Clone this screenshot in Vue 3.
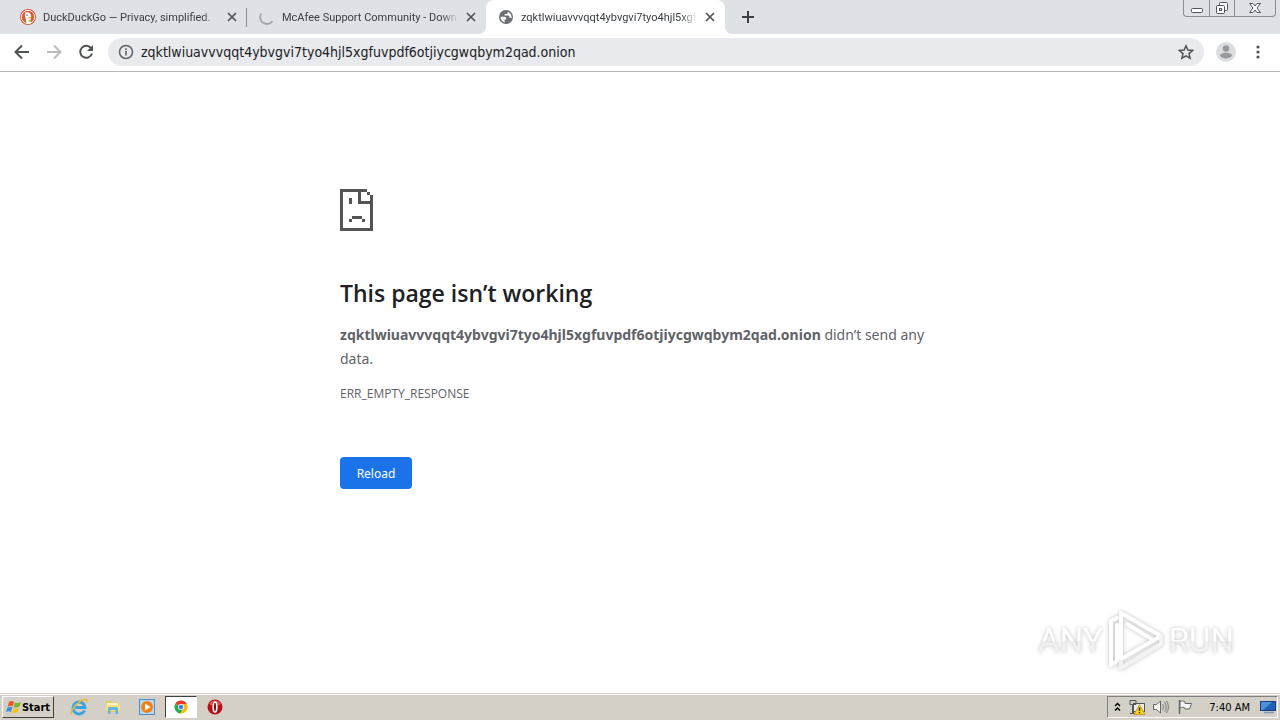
<template>
  <div class="screen">
    <header class="tab-strip">
      <div class="tabs">
        <div v-for="tab in tabs" :key="tab.title" class="tab" :class="{ active: tab.active }">
          <svg v-if="tab.icon === 'duck'" class="favicon" viewBox="0 0 16 16">
            <circle cx="8" cy="8" r="8" fill="#de5833" />
            <circle cx="8" cy="8" r="6.6" fill="none" stroke="#fff" stroke-width="1" />
            <path d="M5.500 3.500c2.500-1 5.500.5 5.500 3.500 0 1.500-.3 2-.5 2.800l.8 4.200c-1.500.8-3.600.7-4.600.2L5.300 8C4.700 6 4.500 4.500 5.500 3.500z" fill="#fff" />
            <path d="M8 8.300c1.200-.5 2.900-.4 4 0-.8.9-2.500 1.400-4 1.200z" fill="#fbbf2d" />
            <path d="M8.300 11.500l2.500-.5v1.800l-2.300-.2z" fill="#4cae4f" />
            <circle cx="7" cy="6.200" r=".7" fill="#38588a" />
          </svg>
          <svg v-else-if="tab.icon === 'spinner'" class="favicon" viewBox="0 0 16 16">
            <path d="M2.300 4.500A6.500 6.500 0 0 0 13.500 12" fill="none" stroke="#a5a8ac" stroke-width="1.800" />
          </svg>
          <svg v-else class="favicon" viewBox="0 0 16 16">
            <circle cx="8" cy="8" r="7" fill="#6b6e72" />
            <path d="M2.500 7.800h3.700c1.200 0 2 .8 2 2v.8h-1.600v2.800C4.300 12.700 2.500 10.600 2.500 7.800z" fill="#fff" />
            <path d="M9.600 2.700v.8c0 1-.6 1.500-1.500 1.500H6.600v1.500h3.500c.9 0 1.300.6 1.300 1.300v1h1c.5 0 .9.3 1.100.7.600-3-1.100-5.800-3.900-6.800z" fill="#fff" />
          </svg>
          <span class="tab-title">{{ tab.title }}</span>
          <button class="tab-close" :aria-label="'Close ' + tab.title">
            <svg width="10" height="10" viewBox="0 0 10 10">
              <path d="M1 1l8 8M9 1l-8 8" stroke="#4f5357" stroke-width="1.700" />
            </svg>
          </button>
        </div>
        <button class="new-tab" aria-label="New tab">
          <svg width="12" height="12" viewBox="0 0 12 12">
            <path d="M6 0v12M0 6h12" stroke="#3c4043" stroke-width="2" />
          </svg>
        </button>
      </div>
      <div class="window-controls">
        <button aria-label="Minimize">
          <svg width="14" height="14" viewBox="0 0 14 14">
            <rect x="1.500" y="7.500" width="11" height="4" rx="1" fill="#fff" stroke="#52555e" />
          </svg>
        </button>
        <button aria-label="Restore">
          <svg width="14" height="14" viewBox="0 0 14 14">
            <rect x="4.500" y="1.500" width="8" height="8" rx="1" fill="#fff" stroke="#52555e" />
            <rect x="1.500" y="4.500" width="8" height="8" rx="1" fill="#fff" stroke="#52555e" />
            <rect x="4.500" y="7.500" width="2" height="2" fill="#fff" stroke="#52555e" />
          </svg>
        </button>
        <button class="wide" aria-label="Close">
          <svg width="14" height="14" viewBox="0 0 14 14">
            <path d="M1.500 2.500h3.500l2 2.500 2-2.500h3.500L9 7l3.500 4.500H9L7 9l-2 2.500H1.500L5 7z" fill="#fff" stroke="#52555e" />
          </svg>
        </button>
      </div>
    </header>

    <nav class="toolbar">
      <button aria-label="Back">
        <svg width="16" height="16" viewBox="0 0 16 16">
          <path d="M15 8H2M8 1.500L1.500 8 8 14.500" fill="none" stroke="#505356" stroke-width="2" />
        </svg>
      </button>
      <button aria-label="Forward" disabled>
        <svg width="16" height="16" viewBox="0 0 16 16">
          <path d="M1 8h13M8 1.500L14.500 8 8 14.500" fill="none" stroke="#b9bbbe" stroke-width="2" />
        </svg>
      </button>
      <button aria-label="Reload page">
        <svg width="16" height="16" viewBox="0 0 16 16">
          <path d="M13.300 4.500A6 6 0 1 0 14 9.500" fill="none" stroke="#505356" stroke-width="2" />
          <path d="M15 1v6H9z" fill="#505356" />
        </svg>
      </button>
      <div class="omnibox">
        <svg width="16" height="16" viewBox="0 0 16 16">
          <circle cx="8" cy="8" r="6.500" fill="none" stroke="#5f6368" stroke-width="1.500" />
          <path d="M8 7v4.500M8 4.300v1.600" stroke="#5f6368" stroke-width="1.600" />
        </svg>
        <input v-model="address" type="text" aria-label="Address" spellcheck="false">
        <button aria-label="Bookmark this page">
          <svg width="16" height="16" viewBox="0 0 16 16">
            <path d="M8 1.800l1.900 4.300 4.700.4-3.600 3.100 1.100 4.600L8 11.800l-4.100 2.400L5 9.600 1.400 6.500l4.700-.4z" fill="none" stroke="#505356" stroke-width="1.500" />
          </svg>
        </button>
      </div>
      <button class="profile" aria-label="Profile">
        <svg width="20" height="20" viewBox="0 0 20 20">
          <circle cx="10" cy="10" r="10" fill="#dcdddf" />
          <circle cx="10" cy="6.500" r="3.200" fill="#96999d" />
          <path d="M4 13.800c0-2 3-3 6-3s6 1 6 3c-1.200 1.800-3.500 2.700-6 2.700s-4.800-.9-6-2.700z" fill="#96999d" />
        </svg>
      </button>
      <button class="menu" aria-label="Menu">
        <svg width="4" height="16" viewBox="0 0 4 16">
          <circle cx="2" cy="3" r="1.600" fill="#505356" />
          <circle cx="2" cy="8" r="1.600" fill="#505356" />
          <circle cx="2" cy="13" r="1.600" fill="#505356" />
        </svg>
      </button>
    </nav>

    <main class="page">
      <div class="error">
        <svg class="sad-icon" width="33" height="42" viewBox="0 0 33 42" shape-rendering="crispEdges">
          <path fill="#535353" d="M0 0h27v3H3v36h27V15H18V3h3v9h9V9h3v33H0zM27 3h3v3h-3zM30 6h3v3h-3zM9 9h3v6H9zM12 27h10v3H12zM9 30h3v3H9zM22 30h3v3h-3z" />
        </svg>
        <h1>This page isn’t working</h1>
        <p><strong>{{ address }}</strong> didn’t send any data.</p>
        <div class="error-code">ERR_EMPTY_RESPONSE</div>
        <button class="reload">Reload</button>
      </div>
      <div class="watermark">
        <span>ANY</span>
        <svg width="58" height="64" viewBox="0 0 58 64">
          <g fill="none" stroke="#fff" stroke-width="4" stroke-linejoin="round" stroke-linecap="round">
            <path d="M10 9l-6 3v44l6-4V16" />
            <path d="M14 50V4l40 23M14 50l40-23M20 15l26 16" />
            <path d="M14 59l40-24v-8M14 59v-6" stroke="#f3f3f3" />
          </g>
        </svg>
        <span>RUN</span>
      </div>
    </main>

    <footer class="taskbar">
      <button class="start">
        <svg width="16" height="16" viewBox="0 0 16 16">
          <path d="M3 3c2-1.500 3.500-1 5 0L6.700 7.500c-1.500-1-3-1.300-5 0z" fill="#e6592b" />
          <path d="M9 3.400c2 1 3.500 1 6-.4l-1.500 4.500c-2 1.400-4 1.300-5.800.4z" fill="#76b82a" />
          <path d="M1.400 8.600c2-1.300 3.500-1 5 0L5 13c-1.500-1-3-1.200-5 0z" fill="#3d91dc" />
          <path d="M7.400 9c2 1 3.500 1 5.800-.3L11.800 13c-2 1.400-4 1.400-5.800.4z" fill="#fbc21c" />
        </svg>
        Start
      </button>
      <div class="launchers">
        <button aria-label="Internet Explorer">
          <svg width="18" height="18" viewBox="0 0 18 18">
            <path d="M14.500 12.500A6 6 0 1 1 15 9.500H5" fill="none" stroke="#36a3e3" stroke-width="2.800" />
            <path d="M1.500 16.500C-.5 13.500 7 4 14 1.500c3-1 3.500.7 2.200 3" fill="none" stroke="#e8b92c" stroke-width="1.500" />
          </svg>
        </button>
        <button aria-label="Explorer">
          <svg width="18" height="18" viewBox="0 0 18 18">
            <path d="M2 3h5l1 1.500h7V14H2z" fill="#ecc95c" />
            <path d="M3 5h11v3H3z" fill="#fff6c8" />
            <path d="M2 7h14v6H2z" fill="#f7df83" />
            <path d="M4 16v-5c0-1.500.7-2 2-2h6c1.300 0 2 .5 2 2v5h-2.500v-4h-5v4z" fill="#62b5e5" />
          </svg>
        </button>
        <button aria-label="Media Player">
          <svg width="18" height="18" viewBox="0 0 18 18">
            <rect x="1.500" y="1.500" width="15" height="15" fill="#b5d9f2" stroke="#4c8ec9" />
            <circle cx="9" cy="9" r="6" fill="#f08316" />
            <path d="M7 5.500v7L12.500 9z" fill="#fff" />
          </svg>
        </button>
        <button class="running" aria-label="Chrome">
          <svg width="14" height="14" viewBox="0 0 16 16">
            <path d="M8 8L1.500 4.200A7.500 7.500 0 0 1 14.500 4.200z" fill="#e33b2e" />
            <path d="M8 8L1.500 4.200A7.500 7.500 0 0 0 7.500 15.500L11 9.500z" fill="#2da94f" />
            <path d="M8 4.500h6.700A7.500 7.500 0 0 1 7.500 15.500L11 9.500z" fill="#fdbd00" />
            <circle cx="8" cy="8" r="3.500" fill="#fff" />
            <circle cx="8" cy="8" r="2.700" fill="#4280ef" />
          </svg>
        </button>
        <button aria-label="Opera">
          <svg width="16" height="16" viewBox="0 0 16 16">
            <circle cx="8" cy="8" r="7.500" fill="#b51218" />
            <path d="M2 5a7 7 0 0 1 12 0c-3 2-9 2-12 0z" fill="#d85652" />
            <ellipse cx="8" cy="8" rx="1.800" ry="5" fill="#8a0a10" stroke="#fff" stroke-width="1.600" />
          </svg>
        </button>
      </div>
      <div class="tray">
        <svg class="chevrons" width="7" height="10" viewBox="0 0 7 10">
          <path d="M1 4l2.500-2.500L6 4M1 8.500L3.500 6 6 8.500" fill="none" stroke="#000" stroke-width="1.500" />
        </svg>
        <svg width="16" height="16" viewBox="0 0 16 16">
          <rect x="4.500" y="4.500" width="11" height="8" fill="#eee" stroke="#555" />
          <path d="M1 1.500h6v4H4.500v8.500M1 1.500v4h2.500V14M1 14.500h6" fill="none" stroke="#555" />
          <path d="M10.500 5.500L16 15.500H5z" fill="#f8d21c" stroke="#b18b0c" stroke-width=".7" />
          <path d="M10.500 8.500v3.500M10.500 13v1.200" stroke="#222" stroke-width="1.300" />
        </svg>
        <svg width="16" height="16" viewBox="0 0 16 16">
          <path d="M.5 5.500h3L7.500 2v12l-4-3.500h-3z" fill="#f5f5f5" stroke="#666" />
          <path d="M9.500 5c1.200 1.800 1.200 4.200 0 6M11.500 3c2.200 3 2.200 7 0 10M13.500 2c2.500 4 2.500 8 0 12" fill="none" stroke="#777" />
        </svg>
        <svg width="16" height="16" viewBox="0 0 16 16">
          <path d="M2.500 1v14" stroke="#666" stroke-width="1.500" />
          <path d="M3 2.500c2-1 3.500-.5 5 .5v1.500h6.500L12.500 10H8V9C6.500 8 5 8 3 9z" fill="#f5f5f5" stroke="#666" />
        </svg>
        <time>7:40 AM</time>
        <svg width="16" height="14" viewBox="0 0 16 14">
          <rect x=".5" y="1.500" width="15" height="9" fill="#1e63b5" stroke="#173f7d" />
          <path d="M1 2h11L3 10H1z" fill="#4d91d8" />
          <path d="M4 12.500h10" stroke="#8297ad" stroke-width="1.500" />
        </svg>
      </div>
    </footer>
  </div>
</template>

<script setup>
import { ref } from 'vue';

const address = ref('zqktlwiuavvvqqt4ybvgvi7tyo4hjl5xgfuvpdf6otjiycgwqbym2qad.onion');

const tabs = ref([
  { title: 'DuckDuckGo — Privacy, simplified.', icon: 'duck', active: false },
  { title: 'McAfee Support Community - Download', icon: 'spinner', active: false },
  { title: address.value, icon: 'globe', active: true }
]);
</script>

<style>
body {
  margin: 0;
}
</style>

<style scoped>
.screen {
  display: flex;
  flex-direction: column;
  min-height: 100vh;
  background: #fff;
  font-family: "DejaVu Sans Condensed", "Noto Sans", sans-serif;
}

button {
  display: flex;
  align-items: center;
  justify-content: center;
  padding: 0;
  border: 0;
  background: none;
  font-family: inherit;
}

svg {
  flex: none;
}

.tab-strip {
  display: flex;
  align-items: flex-start;
  justify-content: space-between;
  height: 34px;
  background: #dee1e6;
}

.tabs {
  display: flex;
  flex: 1;
  min-width: 0;
  height: 34px;
  padding-left: 8px;
}

.tab {
  position: relative;
  display: flex;
  align-items: center;
  box-sizing: border-box;
  width: 239px;
  min-width: 0;
  padding: 0 10px 0 12px;
  color: #3c4043;
  font-family: Roboto, sans-serif;
  font-size: 11px;
}

.tab:first-child::after {
  content: "";
  position: absolute;
  right: 0;
  top: 8px;
  width: 1px;
  height: 19px;
  background: #85898f;
}

.tab.active {
  background: #fff;
  border-radius: 8px 8px 0 0;
}

.tab.active::before,
.tab.active::after {
  content: "";
  position: absolute;
  bottom: 0;
  width: 8px;
  height: 8px;
}

.tab.active::before {
  right: 100%;
  background: radial-gradient(circle at 0 0, transparent 8px, #fff 8px);
}

.tab.active::after {
  left: 100%;
  background: radial-gradient(circle at 100% 0, transparent 8px, #fff 8px);
}

.favicon {
  width: 16px;
  height: 16px;
}

.tab-title {
  flex: 1;
  min-width: 0;
  margin: 0 8px 0 7px;
  overflow: hidden;
  white-space: nowrap;
  mask-image: linear-gradient(to right, #000 calc(100% - 16px), transparent);
}

.tab-close {
  width: 10px;
  height: 16px;
}

.new-tab {
  width: 28px;
  margin-left: 9px;
}

.window-controls {
  display: flex;
  flex: none;
  margin-right: 4px;
  border: 1px solid #888d97;
  border-top: 0;
  border-radius: 0 0 4px 4px;
}

.window-controls button {
  width: 25px;
  height: 16px;
}

.window-controls button + button {
  border-left: 1px solid #888d97;
}

.window-controls .wide {
  width: 41px;
}

.toolbar {
  display: flex;
  align-items: center;
  box-sizing: border-box;
  height: 38px;
  padding: 0 6px 2px;
  border-bottom: 1px solid #b5b6b8;
}

.toolbar > button {
  width: 32px;
  height: 28px;
}

.omnibox {
  display: flex;
  flex: 1;
  align-items: center;
  gap: 7px;
  height: 28px;
  margin: 0 6px;
  padding: 0 10px;
  border-radius: 14px;
  background: #e8eaed;
}

.omnibox input {
  flex: 1;
  min-width: 0;
  height: 24px;
  padding: 0;
  border: 0;
  outline: 0;
  background: none;
  color: #202124;
  font-family: inherit;
  font-size: 14px;
}

.page {
  position: relative;
  flex: 1;
}

.error {
  box-sizing: border-box;
  max-width: 600px;
  margin: 0 auto;
  padding-top: 117px;
  color: #5f6368;
  font-family: "Noto Sans", "Open Sans", sans-serif;
  font-size: 14px;
  line-height: 24px;
}

.sad-icon {
  display: block;
}

h1 {
  margin: 46px 0 14px;
  color: #202124;
  font-family: "Open Sans", sans-serif;
  font-size: 23px;
  font-weight: 600;
  line-height: 32px;
}

p {
  margin: 0;
}

.error-code {
  margin-top: 11px;
  font-family: "Open Sans", sans-serif;
  font-size: 12px;
}

.reload {
  width: 72px;
  height: 32px;
  margin-top: 51px;
  border-radius: 4px;
  background: #1a73e8;
  color: #fff;
  font-size: 12px;
}

.watermark {
  position: absolute;
  right: 46px;
  bottom: 20px;
  display: flex;
  align-items: center;
  gap: 4px;
  font-family: Roboto, sans-serif;
  font-size: 33px;
  line-height: 64px;
  filter: drop-shadow(0 0 2px rgba(0, 0, 0, 0.25));
}

.watermark span {
  background: linear-gradient(#fff 50%, #f1f1f1 50%);
  background-clip: text;
  color: transparent;
}

.taskbar {
  display: flex;
  align-items: center;
  height: 26px;
  border-top: 1px solid #d4d0c8;
  box-shadow: inset 0 1px #fff;
  background: #d4d0c8;
}

.start {
  width: 52px;
  height: 22px;
  margin-left: 2px;
  border: 1px solid;
  border-color: #fff #404040 #404040 #fff;
  color: #000;
  font-size: 11px;
  font-weight: bold;
}

.launchers {
  display: flex;
  flex: 1;
  gap: 2px;
  margin-left: 9px;
}

.launchers button {
  width: 32px;
  height: 22px;
  box-sizing: border-box;
}

.launchers .running {
  border: 1px solid;
  border-color: #404040 #fff #fff #404040;
  background: #fff;
}

.tray {
  display: flex;
  align-items: center;
  gap: 8px;
  box-sizing: border-box;
  height: 22px;
  margin-right: 2px;
  padding: 0 1px 0 6px;
  border: 1px solid;
  border-color: #808080 #fff #fff #808080;
}

time {
  margin: 0 2px 0 8px;
  color: #000;
  font-size: 11px;
}
</style>
